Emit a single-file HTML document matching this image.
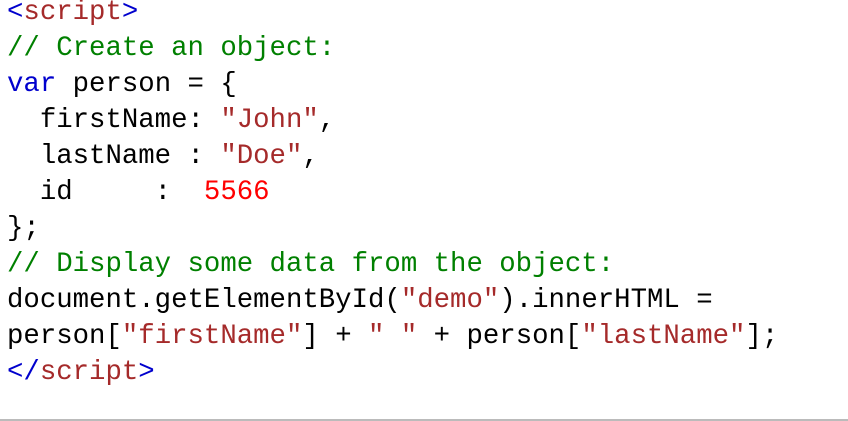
<!DOCTYPE html>
<html><head><style>
html,body{margin:0;padding:0;background:#fff;width:848px;height:421px;overflow:hidden}
pre{margin:0;position:absolute;left:7px;top:-5px;font-family:"Liberation Mono",monospace;font-size:27.35px;line-height:36px;color:#000}
.b{color:#0000cd}.r{color:#a52a2a}.g{color:#008000}.n{color:#ff0000}
.line{position:absolute;left:0;top:419px;width:848px;height:2px;background:#bbb}
</style></head><body>
<pre><span class="b">&lt;</span><span class="r">script</span><span class="b">&gt;</span>
<span class="g">// Create an object:</span>
<span class="b">var</span> person = {
  firstName: <span class="r">"John"</span>,
  lastName : <span class="r">"Doe"</span>,
  id     :  <span class="n">5566</span>
};
<span class="g">// Display some data from the object:</span>
document.getElementById(<span class="r">"demo"</span>).innerHTML =
person[<span class="r">"firstName"</span>] + <span class="r">" "</span> + person[<span class="r">"lastName"</span>];
<span class="b">&lt;/</span><span class="r">script</span><span class="b">&gt;</span></pre>
<div class="line"></div>
</body></html>
